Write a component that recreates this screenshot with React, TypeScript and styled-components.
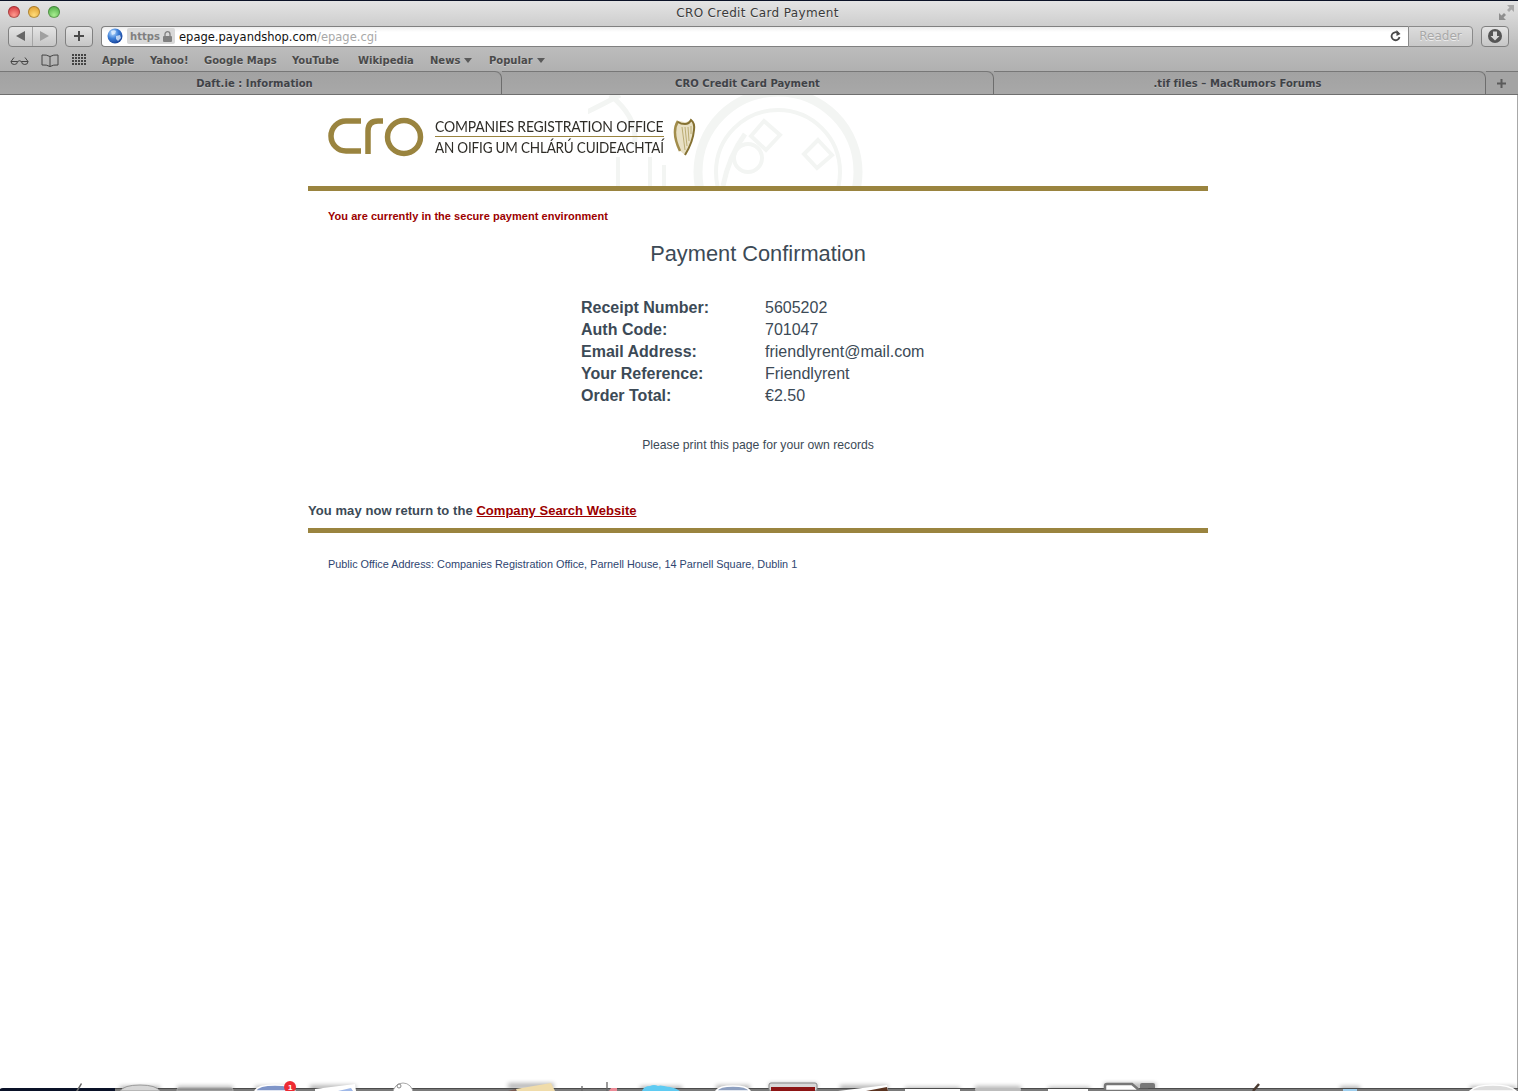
import React from "react";
import styled, { createGlobalStyle } from "styled-components";

const Global = createGlobalStyle`
  html, body { margin: 0; padding: 0; background: #fff; }
  #root { width: 1518px; height: 1091px; }
`;

const Page = styled.div`
  position: relative;
  width: 1518px;
  height: 1091px;
  overflow: hidden;
  display: flex;
  flex-direction: column;
  background: #fff;
`;

const Chrome = styled.header`
  flex: none;
  font-family: "DejaVu Sans", sans-serif;
  background: linear-gradient(#e4e4e4 0, #d2d2d2 20px, #bcbcbc 46px, #b0b0b0 71px);
  border-top: 1px solid #0b1226;
  box-sizing: border-box;
  height: 71px;
  display: flex;
  flex-direction: column;
`;

const TitleBar = styled.div`
  height: 23px;
  display: flex;
  align-items: center;
  padding: 0 4px 0 8px;
`;

const Lights = styled.div`
  display: flex;
  gap: 8px;
  width: 200px;
  margin-top: -2px;
`;

const Light = styled.span<{ $a: string; $b: string }>`
  width: 12px;
  height: 12px;
  border-radius: 50%;
  background: radial-gradient(circle at 50% 75%, ${(p) => p.$a}, ${(p) => p.$b});
  box-shadow: inset 0 0 0 1px rgba(0, 0, 0, 0.25);
`;

const Title = styled.div`
  flex: 1;
  text-align: center;
  font-size: 12px;
  color: #3a3a3a;
  letter-spacing: 0.03em;
  margin-left: -192px;
  text-shadow: 0 1px 0 rgba(255, 255, 255, 0.5);
`;

const Toolbar = styled.div`
  height: 24px;
  display: flex;
  align-items: center;
  padding: 0 9px 0 8px;
`;

const ButtonBox = styled.div<{ $w: number; $ml?: number }>`
  width: ${(p) => p.$w}px;
  height: 21px;
  margin-left: ${(p) => p.$ml ?? 0}px;
  box-sizing: border-box;
  border: 1px solid #808080;
  border-radius: 4px;
  background: linear-gradient(#e4e4e4, #c6c6c6);
  display: flex;
  align-items: center;
  justify-content: center;
  flex: none;
`;

const NavHalf = styled.div<{ $divider?: boolean }>`
  flex: 1;
  height: 100%;
  display: flex;
  align-items: center;
  justify-content: center;
  border-left: ${(p) => (p.$divider ? "1px solid #a5a5a5" : "none")};
`;

const AddressBar = styled.div`
  flex: 1;
  height: 21px;
  margin-left: 8px;
  box-sizing: border-box;
  border: 1px solid #808080;
  border-right: none;
  border-radius: 4px 0 0 4px;
  background: linear-gradient(#eeeeee, #fff 5px);
  display: flex;
  align-items: center;
  padding-left: 5px;
  padding-right: 7px;
`;

const HttpsBadge = styled.div`
  margin-left: 4px;
  width: 48px;
  height: 16px;
  background: #d9d9d9;
  display: flex;
  align-items: center;
  gap: 3px;
  justify-content: center;
  font-size: 10px;
  font-weight: 700;
  color: #808080;
  border-radius: 2px;
  flex: none;
`;

const Url = styled.div`
  margin: 1px 0 0 4px;
  flex: 1;
  font-size: 11.5px;
  color: #111;
`;

const UrlPath = styled.span`
  color: #a8a8a8;
`;

const ReaderButton = styled.div`
  width: 65px;
  height: 21px;
  box-sizing: border-box;
  border: 1px solid #8a8a8a;
  border-radius: 0 4px 4px 0;
  background: linear-gradient(#dcdcdc, #c8c8c8);
  font-size: 12px;
  color: #a8a8a8;
  display: flex;
  align-items: center;
  justify-content: center;
  text-shadow: 0 1px 0 #eee;
  flex: none;
`;

const Bookmarks = styled.nav`
  height: 23px;
  box-sizing: border-box;
  padding: 1px 0 0 10px;
  display: flex;
  align-items: center;
`;

const IconSlot = styled.div<{ $w: number }>`
  width: ${(p) => p.$w}px;
  flex: none;
  display: flex;
  align-items: center;
`;

const Mark = styled.span<{ $w: number }>`
  width: ${(p) => p.$w}px;
  flex: none;
  font-size: 10px;
  font-weight: 700;
  color: #4a4a4a;
  white-space: nowrap;
  display: flex;
  align-items: center;
  gap: 4px;
  text-shadow: 0 1px 0 rgba(255, 255, 255, 0.35);
`;

const Caret = styled.i`
  width: 0;
  height: 0;
  border-left: 4px solid transparent;
  border-right: 4px solid transparent;
  border-top: 5px solid #5a5a5a;
`;

const Tabs = styled.div`
  flex: none;
  height: 24px;
  display: flex;
  font-family: "DejaVu Sans", sans-serif;
  background: #a4a4a4;
  border-bottom: 1px solid #6f6f6f;
  box-sizing: border-box;
`;

const Tab = styled.div<{ $w: number; $pl?: number; $pr?: number }>`
  width: ${(p) => p.$w}px;
  flex: none;
  box-sizing: border-box;
  padding: 0 ${(p) => p.$pr ?? 0}px 0 ${(p) => p.$pl ?? 0}px;
  display: flex;
  align-items: center;
  justify-content: center;
  font-size: 10px;
  font-weight: 700;
  letter-spacing: 0.05px;
  color: #3f4247;
  text-shadow: 0 1px 0 rgba(255, 255, 255, 0.25);
  background: linear-gradient(#a2a2a2, #a8a8a8);
  border-top: 1px solid #777;
  border-right: 1px solid #6d6d6d;
  border-top-right-radius: 7px;
`;

const NewTab = styled.div`
  flex: 1;
  display: flex;
  align-items: center;
  justify-content: center;
  border-top: 1px solid #777;
  padding-right: 2px;
`;

const Viewport = styled.main`
  flex: 1;
  min-height: 0;
  border-right: 1px solid #a8a8a8;
  display: flex;
  justify-content: center;
  font-family: "Liberation Sans", Arial, sans-serif;
`;

const Column = styled.div`
  width: 900px;
  margin-right: 1px;
`;

const Masthead = styled.div`
  position: relative;
  height: 71px;
  border-bottom: 5px solid #9a843f;
  overflow: hidden;
  display: flex;
  padding: 20px 0 0 19px;
`;

const Watermark = styled.svg`
  position: absolute;
  left: 280px;
  top: 0;
`;

const LogoMark = styled.svg`
  flex: none;
  position: relative;
`;

const LogoText = styled.div`
  position: relative;
  margin: 1px 0 0 10px;
  width: 229px;
  height: 40px;
  font-family: "Lato", sans-serif;
  font-size: 15.5px;
  color: #2f2d28;
  line-height: 20px;
  white-space: nowrap;
  flex: none;
`;

const LogoLine = styled.div<{ $top?: boolean }>`
  height: 20px;
  border-bottom: ${(p) => (p.$top ? "1px solid #9a843f" : "none")};
`;

const LogoWords = styled.span<{ $scale: number }>`
  display: inline-block;
  letter-spacing: -0.2px;
  transform-origin: 0 50%;
  transform: scaleX(${(p) => p.$scale});
`;

const Harp = styled.svg`
  flex: none;
  margin: 3px 0 0 9px;
  position: relative;
`;

const Secure = styled.p`
  margin: 19px 0 0 20px;
  font-size: 11px;
  line-height: 13px;
  font-weight: 700;
  letter-spacing: 0.04px;
  color: #9c0000;
`;

const Heading = styled.h1`
  margin: 17px 0 0;
  text-align: center;
  font-size: 21.8px;
  line-height: 27px;
  font-weight: 400;
  color: #3c4a56;
`;

const Details = styled.dl`
  margin: 30px 0 0 273px;
  display: grid;
  grid-template-columns: 184px auto;
  grid-auto-rows: 22px;
  font-size: 16px;
  line-height: 22px;
  color: #3c4a56;
`;

const Label = styled.dt`
  font-weight: 700;
`;

const Value = styled.dd`
  margin: 0;
`;

const PrintNote = styled.p`
  margin: 30px 0 0;
  text-align: center;
  font-size: 12.2px;
  line-height: 16px;
  color: #3c4a56;
`;

const ReturnLine = styled.p`
  margin: 50px 0 0;
  font-size: 13px;
  line-height: 16px;
  font-weight: 700;
  color: #3c4a56;
  letter-spacing: 0.07px;
`;

const ReturnLink = styled.a`
  color: #9c0000;
  text-decoration: underline;
  letter-spacing: 0.03px;
`;

const Rule = styled.div`
  height: 5px;
  margin-top: 9px;
  background: #9a843f;
`;

const Footer = styled.p`
  margin: 25px 0 0 20px;
  font-size: 10.87px;
  line-height: 13px;
  color: #2e4570;
`;

const Dock = styled.svg`
  position: absolute;
  left: 0;
  bottom: 0;
`;

const BadgeText = styled.text`
  font-family: "Liberation Sans", sans-serif;
  font-size: 8px;
  font-weight: 700;
  fill: #fff;
`;

const bookmarks: [string, number, boolean?][] = [
  ["Apple", 48],
  ["Yahoo!", 54],
  ["Google Maps", 88],
  ["YouTube", 66],
  ["Wikipedia", 72],
  ["News", 59, true],
  ["Popular", 70, true],
];

const details: [string, string][] = [
  ["Receipt Number:", "5605202"],
  ["Auth Code:", "701047"],
  ["Email Address:", "friendlyrent@mail.com"],
  ["Your Reference:", "Friendlyrent"],
  ["Order Total:", "€2.50"],
];

const shadows: [number, number, number][] = [
  [120, 40, 10], [177, 56, 10], [255, 40, 10], [310, 46, 9], [508, 46, 7], [640, 42, 10],
  [716, 34, 9], [769, 48, 7], [840, 48, 9], [905, 55, 11], [975, 46, 10], [1048, 42, 11],
  [1104, 52, 7], [1340, 20, 10], [1470, 46, 10],
];

export default function App() {
  return (
    <Page>
      <Global />
      <Chrome>
        <TitleBar>
          <Lights>
            <Light $a="#ff9a8f" $b="#c9202a" />
            <Light $a="#ffdc7a" $b="#d8901c" />
            <Light $a="#a8ee90" $b="#3c9e36" />
          </Lights>
          <Title>CRO Credit Card Payment</Title>
          <svg width="15" height="15" viewBox="0 0 15 15">
            <path d="M0 15V8l2.500 2.500L5 8l2 2-2.500 2.500L7 15z" fill="#8e8e8e" />
            <path d="M15 0v7l-2.500-2.500L10 7 8 5l2.500-2.500L8 0z" fill="#a8a8a8" />
          </svg>
        </TitleBar>
        <Toolbar>
          <ButtonBox $w={49}>
            <NavHalf>
              <svg width="9" height="10"><path d="M0 5 9 0v10z" fill="#666" /></svg>
            </NavHalf>
            <NavHalf $divider>
              <svg width="9" height="10"><path d="M9 5 0 0v10z" fill="#a0a0a0" /></svg>
            </NavHalf>
          </ButtonBox>
          <ButtonBox $w={28} $ml={8}>
            <svg width="10" height="10"><path d="M4 0h2v4h4v2H6v4H4V6H0V4h4z" fill="#4a4a4a" /></svg>
          </ButtonBox>
          <AddressBar>
            <svg width="16" height="16" viewBox="0 0 16 16" style={{ flex: "none" }}>
              <defs>
                <radialGradient id="globe" cx="35%" cy="30%" r="75%">
                  <stop offset="0" stopColor="#bfe0ff" />
                  <stop offset="0.5" stopColor="#3d7fd8" />
                  <stop offset="1" stopColor="#143f96" />
                </radialGradient>
              </defs>
              <circle cx="8" cy="8" r="7.500" fill="url(#globe)" />
              <path d="M4 3c2-1 4-1 5 0L8 6 5 7zM9 8l4-1 1 3-3 3-2-2z" fill="#e7f2ff" opacity=".75" />
            </svg>
            <HttpsBadge>
              https
              <svg width="9" height="11" viewBox="0 0 9 11">
                <path d="M2 5V3.200a2.500 2.500 0 0 1 5 0V5" fill="none" stroke="#808080" strokeWidth="1.300" />
                <rect y="5" width="9" height="6" rx="1" fill="#808080" />
              </svg>
            </HttpsBadge>
            <Url>
              epage.payandshop.com<UrlPath>/epage.cgi</UrlPath>
            </Url>
            <svg width="11" height="12" viewBox="0 0 11 12">
              <path d="M9.500 7a4 4 0 1 1-1.300-3.800" fill="none" stroke="#4a4a4a" strokeWidth="1.800" />
              <path d="M6.500 0v6l4-2z" fill="#4a4a4a" />
            </svg>
          </AddressBar>
          <ReaderButton>Reader</ReaderButton>
          <ButtonBox $w={28} $ml={8}>
            <svg width="16" height="16" viewBox="0 0 16 16">
              <circle cx="8" cy="8" r="7" fill="#555" />
              <path d="M6 3.500h4V8h2.500L8 12.500 3.500 8H6z" fill="#d8d8d8" />
            </svg>
          </ButtonBox>
        </Toolbar>
        <Bookmarks>
          <IconSlot $w={31}>
            <svg width="19" height="9" viewBox="0 0 19 9">
              <g fill="none" stroke="#444" strokeWidth="1">
                <path d="M1 5.500h6.500q0 3-3.200 3T1 5.500zM11.500 5.500H18q0 3-3.200 3t-3.300-3z" />
                <path d="M7.500 5.500q2-1.500 4 0M1 5.500 4 1.500M18 5.500l-3-4" />
              </g>
            </svg>
          </IconSlot>
          <IconSlot $w={31}>
            <svg width="18" height="13" viewBox="0 0 18 13">
              <path d="M9 2.500Q5.500.5 1 1v10q4.500-.5 8 1.500 3.500-2 8-1.500V1q-4.500-.5-8 1.500zM9 2.500v10" fill="none" stroke="#444" />
            </svg>
          </IconSlot>
          <IconSlot $w={30}>
            <svg width="15" height="12" viewBox="0 0 15 12">
              <path d="M0 1h15M0 4h15M0 7h15M0 10h15" stroke="#444" strokeWidth="2" strokeDasharray="2 1" />
            </svg>
          </IconSlot>
          {bookmarks.map(([name, width, menu]) => (
            <Mark key={name} $w={width}>
              {name}
              {menu && <Caret />}
            </Mark>
          ))}
        </Bookmarks>
      </Chrome>
      <Tabs>
        <Tab $w={502} $pl={8}>Daft.ie : Information</Tab>
        <Tab $w={492}>CRO Credit Card Payment</Tab>
        <Tab $w={492} $pr={4}>.tif files – MacRumors Forums</Tab>
        <NewTab>
          <svg width="9" height="9"><path d="M3.500 0h2v3.500H9v2H5.500V9h-2V5.500H0v-2h3.500z" fill="#5a5a5a" /></svg>
        </NewTab>
      </Tabs>
      <Viewport>
        <Column>
          <Masthead>
            <Watermark width="300" height="91" viewBox="0 0 300 91">
              <g fill="none" stroke="#f3f5f3">
                <circle cx="190" cy="77" r="80" strokeWidth="9" />
                <circle cx="190" cy="77" r="62" strokeWidth="4" />
                <circle cx="160" cy="63" r="14" strokeWidth="4" />
                <path d="M176 26l16 14-14 15-15-14zM230 45l14 15-15 13-13-14z" strokeWidth="4" />
                <path d="M135 91q6-30 22-52" strokeWidth="5" />
                <path d="M30 91V62M62 91V62M76 91V70" strokeWidth="4" />
                <path d="M22 0q30 24 24 52M-20 26q30-14 52-26" strokeWidth="5" />
              </g>
            </Watermark>
            <LogoMark width="98" height="42" viewBox="0 0 98 42">
              <g fill="none" stroke="#9a843f" strokeWidth="5.500">
                <path d="M34 6H19a15 15 0 0 0 0 30h15" />
                <path d="M41 39V16q0-10 10-10h5" />
                <circle cx="77" cy="22" r="16.500" />
              </g>
            </LogoMark>
            <LogoText>
              <LogoLine $top>
                <LogoWords $scale={0.9}>COMPANIES REGISTRATION OFFICE</LogoWords>
              </LogoLine>
              <LogoLine>
                <LogoWords $scale={0.87}>AN OIFIG UM CHLÁRÚ CUIDEACHTAÍ</LogoWords>
              </LogoLine>
            </LogoText>
            <Harp width="24" height="38" viewBox="0 0 24 38">
              <path d="M5 3Q-2 14 7 33l5 4q8-14 9-26 1-7-3-10-3 4-7 3-3-1-6-1z" fill="#e8e0c4" />
              <path d="M9 9l3 23M12 9l2 19M15 9l1 14M18 8v8" stroke="#a89650" strokeWidth="0.700" />
              <path d="M5 3Q-2 14 7 33" fill="none" stroke="#a28d4b" strokeWidth="2.500" />
              <path d="M5 4q3 2 7 2 4 0 6-4 4 3 3 10-1 12-9 25" fill="none" stroke="#857132" strokeWidth="2" />
            </Harp>
          </Masthead>
          <Secure>You are currently in the secure payment environment</Secure>
          <Heading>Payment Confirmation</Heading>
          <Details>
            {details.map(([label, value]) => (
              <React.Fragment key={label}>
                <Label>{label}</Label>
                <Value>{value}</Value>
              </React.Fragment>
            ))}
          </Details>
          <PrintNote>Please print this page for your own records</PrintNote>
          <ReturnLine>
            You may now return to the <ReturnLink href="#">Company Search Website</ReturnLink>
          </ReturnLine>
          <Rule />
          <Footer>
            Public Office Address: Companies Registration Office, Parnell House, 14 Parnell Square, Dublin 1
          </Footer>
        </Column>
      </Viewport>
      <Dock width="1518" height="15" viewBox="0 0 1518 15">
        <defs>
          <filter id="soft" x="-20%" y="-100%" width="140%" height="300%">
            <feGaussianBlur stdDeviation="2" />
          </filter>
        </defs>
        <g fill="#000" opacity=".28" filter="url(#soft)">
          {shadows.map(([x, w, y]) => (
            <rect key={x} x={x} y={y} width={w} height={6} />
          ))}
        </g>
        <rect x="115" y="12" width="1403" height="3" fill="#7a7a7a" />
        <rect x="115" y="12" width="1403" height="1" fill="#4c4c4c" />
        <path d="M0 15v-2q1-1 3-1h112v3z" fill="#0a1228" />
        <path d="M76 15l5-8 1 1-4 7z" fill="#666" />
        <path d="M120 15q4-6 20-6t20 6z" fill="#d6d6d6" stroke="#999" />
        <path d="M177 15v-1q0-2 2-2h52q2 0 2 2v1z" fill="#8e8e8e" stroke="#aaa" />
        <path d="M255 15q3-6 20-6t20 6z" fill="#7f95c8" stroke="#fff" strokeWidth="1.500" />
        <circle cx="290" cy="11" r="6" fill="#ee2b33" />
        <BadgeText x="288" y="14">1</BadgeText>
        <path d="M315 15v-2l40-5 1 7z" fill="#fff" />
        <path d="M338 15l13-3 2 3z" fill="#9fb8e8" />
        <circle cx="403" cy="17" r="10" fill="#fff" stroke="#aaa" />
        <circle cx="399" cy="10" r="2" fill="none" stroke="#888" />
        <path d="M516 13l35-6 4 8h-38z" fill="#f0dcaa" />
        <path d="M508 15l8-2v2z" fill="#7a5a50" />
        <path d="M582 15v-5M607 15V6" stroke="#666" strokeWidth="1.300" />
        <path d="M609 15l2-3h6v3z" fill="#ec8a96" />
        <path d="M642 15q2-5 8-5 4-2 8 0 2-1 6 0 4 1 6 1 6 1 10 4z" fill="#5fcbf2" />
        <path d="M716 15q3-5 17-5t17 5z" fill="#8ea0c0" stroke="#fff" strokeWidth="1.500" />
        <rect x="769" y="7" width="48" height="8" rx="2" fill="#d8d8d8" stroke="#888" />
        <rect x="771" y="11" width="44" height="4" fill="#8c1414" />
        <path d="M838 15l49-6 1 6z" fill="#fff" />
        <path d="M866 15l21-4 1 4z" fill="#5a3320" />
        <rect x="905" y="13" width="55" height="2" fill="#fff" />
        <rect x="975" y="12" width="46" height="3" rx="1" fill="#bdbdbd" />
        <rect x="1048" y="13" width="40" height="2" fill="#fff" />
        <path d="M1105 15v-5q0-2 2-2h25l7 6h8v1z" fill="#fff" stroke="#777" strokeWidth="2.500" />
        <path d="M1140 12V9q0-2 2-2h11q2 0 2 2v3z" fill="#777" />
        <path d="M1253 15l6-7" stroke="#4a3a30" strokeWidth="2.500" />
        <rect x="1343" y="13" width="14" height="2" fill="#9fd0f0" />
        <path d="M1470 15q6-6 23-6t23 6z" fill="#ddd" stroke="#fff" strokeWidth="1.500" />
      </Dock>
    </Page>
  );
}
